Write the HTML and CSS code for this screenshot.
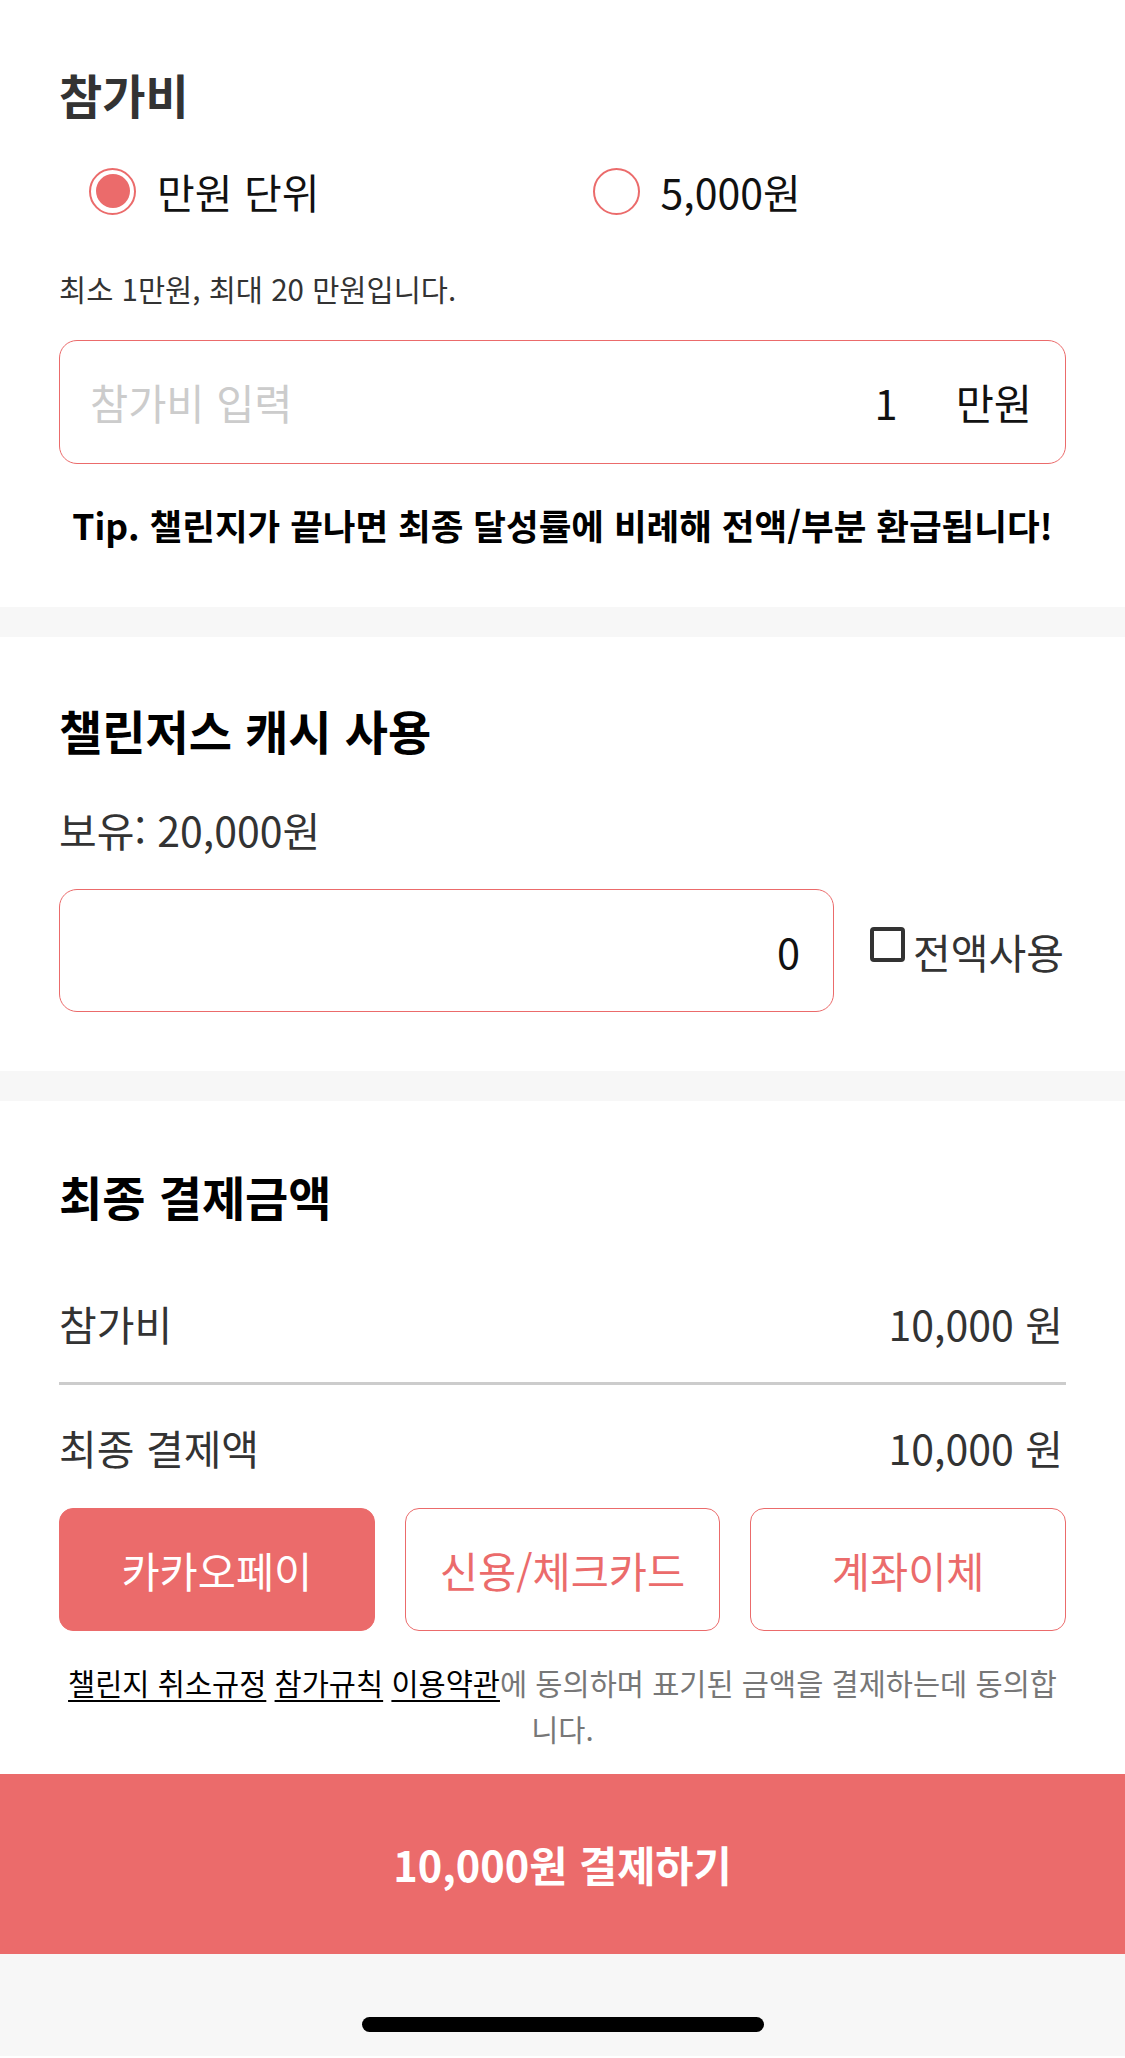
FILE: index.html
```html
<!DOCTYPE html>
<html lang="ko">
<head>
  <meta charset="UTF-8">
  <title>참가비 결제</title>
  <link rel="stylesheet" href="styles.css">
</head>
<body>

  <div class="section fee-section">
    <h2 class="title title-gray">참가비</h2>
    <div class="radio-row">
      <label class="radio-item">
        <span class="radio checked"></span>
        <span>만원 단위</span>
      </label>
      <label class="radio-item">
        <span class="radio"></span>
        <span>5,000원</span>
      </label>
    </div>
    <p class="hint">최소 1만원, 최대 20 만원입니다.</p>
    <div class="field">
      <span class="placeholder">참가비 입력</span>
      <span class="value">1</span>
      <span class="unit">만원</span>
    </div>
    <p class="tip">Tip. 챌린지가 끝나면 최종 달성률에 비례해 전액/부분 환급됩니다!</p>
  </div>

  <div class="gap"></div>

  <div class="section cash-section">
    <h2 class="title">챌린저스 캐시 사용</h2>
    <p class="owned">보유: 20,000원</p>
    <div class="cash-row">
      <div class="field cash-field">
        <span class="value">0</span>
      </div>
      <label class="check-all">
        <span class="checkbox"></span>
        <span>전액사용</span>
      </label>
    </div>
  </div>

  <div class="gap"></div>

  <div class="section total-section">
    <h2 class="title">최종 결제금액</h2>
    <div class="line line-first">
      <span>참가비</span>
      <span>10,000 원</span>
    </div>
    <div class="line">
      <span>최종 결제액</span>
      <span>10,000 원</span>
    </div>
    <div class="pay-methods">
      <button class="method active">카카오페이</button>
      <button class="method">신용/체크카드</button>
      <button class="method">계좌이체</button>
    </div>
    <p class="terms"><u>챌린지 취소규정</u> <u>참가규칙</u> <u>이용약관</u>에 동의하며 표기된 금액을 결제하는데 동의합니다.</p>
  </div>

  <button class="pay-button">10,000원 결제하기</button>

  <div class="home-area">
    <div class="home-bar"></div>
  </div>

</body>
</html>
```

FILE: styles.css
```css
body {
  margin: 0;
  font-family: "Noto Sans CJK KR", "Noto Sans", sans-serif;
  color: #333;
  background: #fff;
}
p {
  margin: 0;
}
.section {
  padding: 0 59px;
}
.fee-section {
  padding-top: 64px;
  padding-bottom: 58px;
}
.cash-section {
  padding-top: 63px;
  padding-bottom: 59px;
}
.total-section {
  padding-top: 65px;
  padding-bottom: 23px;
}
.gap {
  height: 30px;
  background-color: #f7f7f7;
}
.title {
  margin: 0;
  font-size: 47px;
  line-height: 60px;
  font-weight: 700;
  color: #000;
}
.title-gray {
  color: #333;
}

/* 참가비 */
.radio-row {
  display: grid;
  grid-template-columns: 1fr 1fr;
  margin-top: 37px;
}
.radio-item {
  display: flex;
  align-items: center;
  gap: 21px;
  padding-left: 30px;
  height: 60px;
  font-size: 41px;
  color: #111;
}
.radio {
  width: 43px;
  height: 43px;
  border: 2px solid #eb6b6b;
  border-radius: 50%;
  box-sizing: content-box;
  display: flex;
  align-items: center;
  justify-content: center;
}
.radio.checked::after {
  content: "";
  width: 34px;
  height: 34px;
  border-radius: 50%;
  background-color: #eb6b6b;
}
.hint {
  margin-top: 47px;
  font-size: 29.5px;
  line-height: 40px;
}
.field {
  display: flex;
  align-items: center;
  height: 124px;
  box-sizing: border-box;
  margin-top: 32px;
  padding: 0 33px 0 30px;
  border: 1.5px solid #eb6b6b;
  border-radius: 18px;
  font-size: 41.5px;
  color: #111;
}
.placeholder {
  flex: 1;
  color: #ccc;
}
.unit {
  margin-left: 58px;
}
.tip {
  margin-top: 37px;
  text-align: center;
  font-size: 35.5px;
  line-height: 48px;
  font-weight: 700;
  color: #000;
}

/* 캐시 */
.owned {
  margin-top: 44px;
  font-size: 41px;
  line-height: 50px;
}
.cash-row {
  display: flex;
  align-items: center;
  margin-top: 35px;
}
.cash-field {
  width: 775px;
  height: 123px;
  margin-top: 0;
  justify-content: flex-end;
  padding-right: 33px;
}
.check-all {
  display: flex;
  align-items: center;
  margin-left: 36px;
  font-size: 41px;
  color: #333;
}
.checkbox {
  width: 27px;
  height: 27px;
  border: 4px solid #333;
  border-radius: 4px;
  margin-right: 8px;
  margin-top: -12px;
}

/* 결제금액 */
.line {
  display: flex;
  justify-content: space-between;
  align-items: center;
  font-size: 41px;
  line-height: 50px;
  padding-right: 3px;
}
.line-first {
  margin-top: 72px;
  padding-bottom: 34px;
  border-bottom: 3px solid #ccc;
}
.line-first + .line {
  margin-top: 37px;
}
.pay-methods {
  display: grid;
  grid-template-columns: 1fr 1fr 1fr;
  gap: 30px;
  margin-top: 36px;
}
.method {
  height: 123px;
  border: 1.5px solid #eb6b6b;
  border-radius: 14px;
  background: #fff;
  color: #eb6b6b;
  font-family: inherit;
  font-size: 41.5px;
  cursor: pointer;
}
.method.active {
  background-color: #eb6b6b;
  color: #fff;
}
.terms {
  margin-top: 28px;
  text-align: center;
  font-size: 29.5px;
  line-height: 46px;
  color: #777;
}
.terms u {
  color: #000;
  text-underline-offset: 5px;
}
.pay-button {
  display: block;
  width: 100%;
  height: 180px;
  border: none;
  background-color: #eb6b6b;
  color: #fff;
  font-family: inherit;
  font-size: 41.5px;
  font-weight: 700;
  cursor: pointer;
}
.home-area {
  height: 102px;
  background-color: #f7f7f7;
  display: flex;
  justify-content: center;
  align-items: flex-end;
}
.home-bar {
  width: 402px;
  height: 15px;
  margin-bottom: 24px;
  border-radius: 8px;
  background-color: #000;
}
```
